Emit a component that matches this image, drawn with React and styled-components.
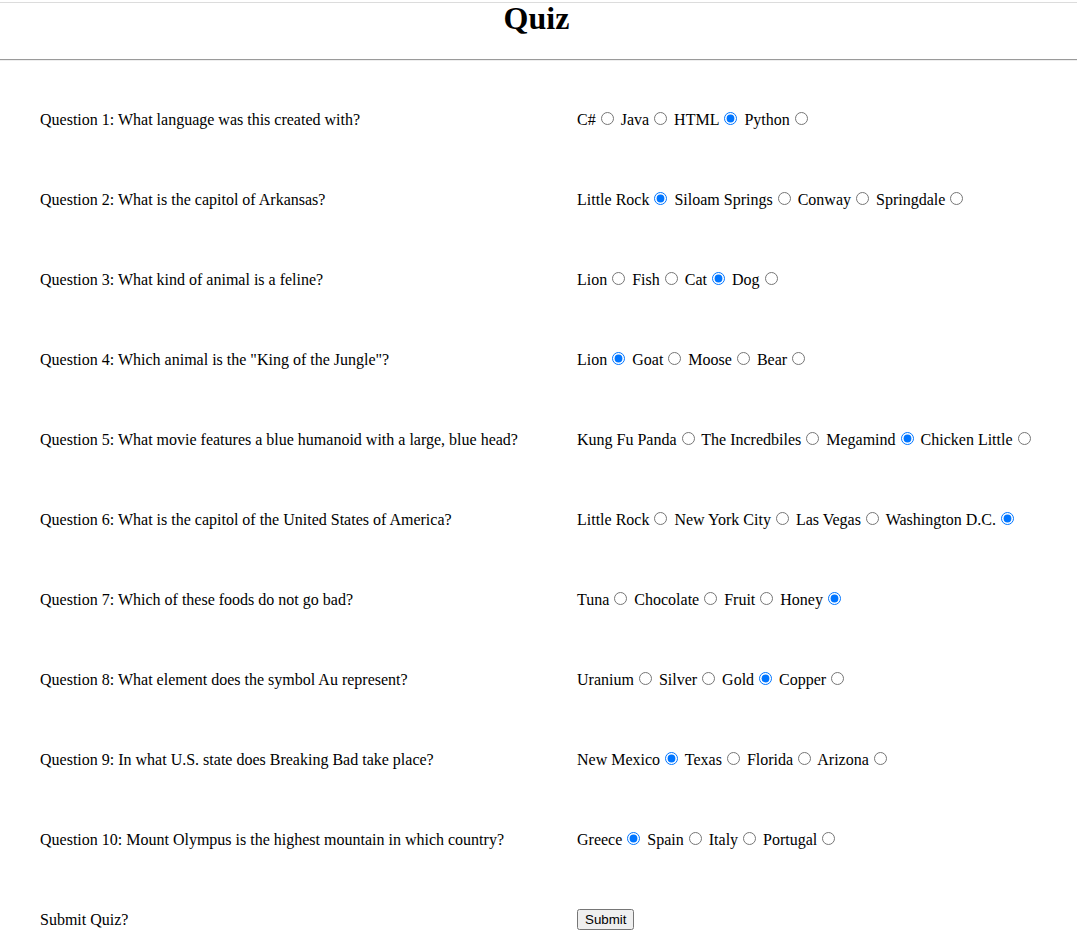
import React from "react";
import styled, { createGlobalStyle } from "styled-components";

const questions = [
  { text: "What language was this created with?", options: ["C#", "Java", "HTML", "Python"], picked: 2 },
  { text: "What is the capitol of Arkansas?", options: ["Little Rock", "Siloam Springs", "Conway", "Springdale"], picked: 0 },
  { text: "What kind of animal is a feline?", options: ["Lion", "Fish", "Cat", "Dog"], picked: 2 },
  { text: 'Which animal is the "King of the Jungle"?', options: ["Lion", "Goat", "Moose", "Bear"], picked: 0 },
  { text: "What movie features a blue humanoid with a large, blue head?", options: ["Kung Fu Panda", "The Incredbiles", "Megamind", "Chicken Little"], picked: 2 },
  { text: "What is the capitol of the United States of America?", options: ["Little Rock", "New York City", "Las Vegas", "Washington D.C."], picked: 3 },
  { text: "Which of these foods do not go bad?", options: ["Tuna", "Chocolate", "Fruit", "Honey"], picked: 3 },
  { text: "What element does the symbol Au represent?", options: ["Uranium", "Silver", "Gold", "Copper"], picked: 2 },
  { text: "In what U.S. state does Breaking Bad take place?", options: ["New Mexico", "Texas", "Florida", "Arizona"], picked: 0 },
  { text: "Mount Olympus is the highest mountain in which country?", options: ["Greece", "Spain", "Italy", "Portugal"], picked: 0 },
];

const GlobalStyle = createGlobalStyle`
  body {
    margin: 0;
    background: #fff;
    color: #000;
    font-family: "Liberation Serif", "Times New Roman", serif;
    font-size: 16px;
  }
`;

const TopRule = styled.div`
  margin-top: 2px;
  border-top: 1px solid #dcdcdc;
`;

const Title = styled.h1`
  margin: -3px 0 0;
  padding-right: 4px;
  font-size: 32px;
  font-weight: bold;
  text-align: center;
`;

const Divider = styled.hr`
  margin: 22px 0 0;
  border: 0;
  border-top: 1px solid #9a9a9a;
  border-bottom: 1px solid #eeeeee;
`;

const QuizList = styled.form`
  padding-top: 18px;
`;

const Row = styled.div`
  display: grid;
  grid-template-columns: 537px 1fr;
  height: 80px;
  align-items: center;
  padding-left: 40px;
`;

const Prompt = styled.div`
  padding-top: 2px;
`;

const Answers = styled.div`
  white-space: nowrap;
`;

const SubmitButton = styled.button`
  justify-self: start;
`;

const App = () => (
  <>
    <GlobalStyle />
    <TopRule />
    <Title>Quiz</Title>
    <Divider />
    <QuizList onSubmit={(e) => e.preventDefault()}>
      {questions.map((q, i) => (
        <Row key={i}>
          <Prompt>
            Question {i + 1}: {q.text}
          </Prompt>
          <Answers>
            {q.options.map((opt, j) => (
              <React.Fragment key={opt}>
                {opt}
                <input type="radio" name={"q" + i} defaultChecked={j === q.picked} />{" "}
              </React.Fragment>
            ))}
          </Answers>
        </Row>
      ))}
      <Row>
        <Prompt>Submit Quiz?</Prompt>
        <SubmitButton type="submit">Submit</SubmitButton>
      </Row>
    </QuizList>
  </>
);

export default App;
